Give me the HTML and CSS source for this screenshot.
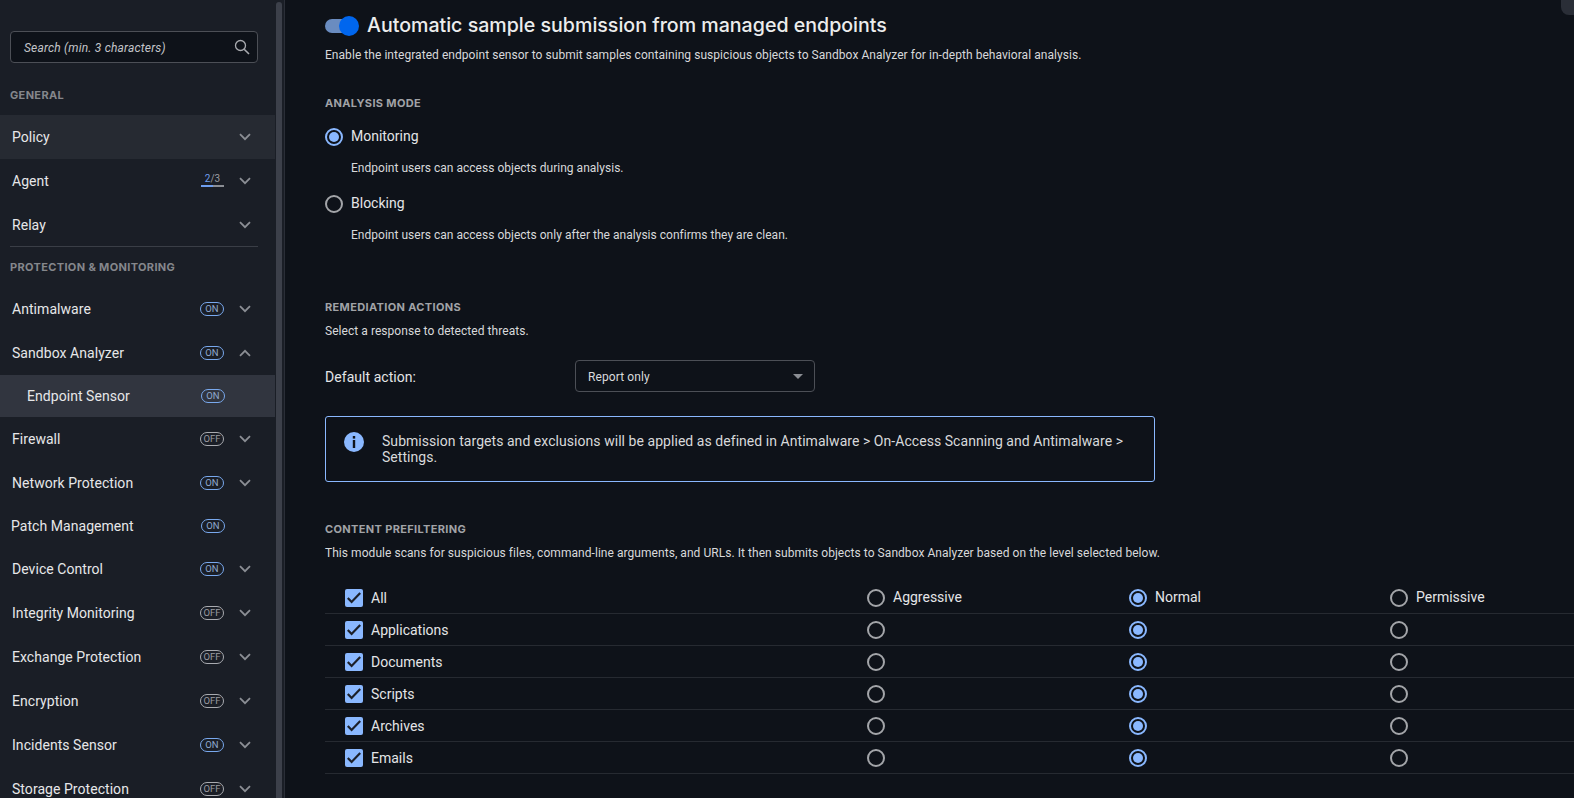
FILE: index.html
```html
<!DOCTYPE html>
<html>
<head>
  <title>Policy - Sandbox Analyzer</title>
  <link rel="stylesheet" href="styles.css">
</head>
<body>
  <svg class="sprites" width="0" height="0">
    <symbol id="chev" viewBox="0 0 12 8"><path d="M1 1.2 6 6.2 11 1.2" fill="none" stroke="#8b8e94" stroke-width="1.8"/></symbol>
    <symbol id="tick" viewBox="0 0 18 18"><path d="M2.8 9 6.6 13 15.2 4" fill="none" stroke="#1c2029" stroke-width="2.2"/></symbol>
  </svg>

  <aside class="sidebar">
    <div class="search">
      <span class="search-text">Search (min. 3 characters)</span>
      <svg class="search-icon" width="16" height="16" viewBox="0 0 16 16"><circle cx="6.5" cy="6.5" r="5" fill="none" stroke="#a9abb0" stroke-width="1.3"/><path d="M10.2 10.2 15 15" stroke="#a9abb0" stroke-width="1.6"/></svg>
    </div>

    <div class="nav-title">GENERAL</div>
    <div class="nav-row hover"><span class="nav-name">Policy</span><svg class="chev"><use href="#chev"/></svg></div>
    <div class="nav-row"><span class="nav-name">Agent</span><span class="progress"><span class="progress-text"><b>2</b>/3</span></span><svg class="chev"><use href="#chev"/></svg></div>
    <div class="nav-row"><span class="nav-name">Relay</span><svg class="chev"><use href="#chev"/></svg></div>
    <div class="nav-sep"></div>

    <div class="nav-title">PROTECTION &amp; MONITORING</div>
    <div class="nav-row"><span class="nav-name">Antimalware</span><span class="pill on">ON</span><svg class="chev"><use href="#chev"/></svg></div>
    <div class="nav-row"><span class="nav-name">Sandbox Analyzer</span><span class="pill on">ON</span><svg class="chev up"><use href="#chev"/></svg></div>
    <div class="nav-row sub"><span class="nav-name">Endpoint Sensor</span><span class="pill on">ON</span></div>
    <div class="nav-row"><span class="nav-name">Firewall</span><span class="pill">OFF</span><svg class="chev"><use href="#chev"/></svg></div>
    <div class="nav-row"><span class="nav-name">Network Protection</span><span class="pill on">ON</span><svg class="chev"><use href="#chev"/></svg></div>
    <div class="nav-row single"><span class="nav-name">Patch Management</span><span class="pill on">ON</span></div>
    <div class="nav-row"><span class="nav-name">Device Control</span><span class="pill on">ON</span><svg class="chev"><use href="#chev"/></svg></div>
    <div class="nav-row"><span class="nav-name">Integrity Monitoring</span><span class="pill">OFF</span><svg class="chev"><use href="#chev"/></svg></div>
    <div class="nav-row"><span class="nav-name">Exchange Protection</span><span class="pill">OFF</span><svg class="chev"><use href="#chev"/></svg></div>
    <div class="nav-row"><span class="nav-name">Encryption</span><span class="pill">OFF</span><svg class="chev"><use href="#chev"/></svg></div>
    <div class="nav-row"><span class="nav-name">Incidents Sensor</span><span class="pill on">ON</span><svg class="chev"><use href="#chev"/></svg></div>
    <div class="nav-row"><span class="nav-name">Storage Protection</span><span class="pill">OFF</span><svg class="chev"><use href="#chev"/></svg></div>
  </aside>
  <div class="scrollbar"><div class="thumb"></div></div>

  <main class="main">
    <div class="corner"></div>

    <div class="title-row">
      <span class="toggle"></span>
      <h1>Automatic sample submission from managed endpoints</h1>
    </div>
    <p class="text intro">Enable the integrated endpoint sensor to submit samples containing suspicious objects to Sandbox Analyzer for in-depth behavioral analysis.</p>

    <h2 class="mode-title">ANALYSIS MODE</h2>
    <div class="option first"><span class="radio checked"></span><span class="label">Monitoring</span></div>
    <p class="text hint">Endpoint users can access objects during analysis.</p>
    <div class="option second"><span class="radio"></span><span class="label">Blocking</span></div>
    <p class="text hint">Endpoint users can access objects only after the analysis confirms they are clean.</p>

    <h2 class="remediation-title">REMEDIATION ACTIONS</h2>
    <p class="text under-title">Select a response to detected threats.</p>
    <div class="action-row">
      <span class="label action-label">Default action:</span>
      <div class="select"><span class="select-text">Report only</span><span class="caret"></span></div>
    </div>

    <div class="info">
      <svg class="info-icon" width="20" height="20" viewBox="0 0 20 20"><circle cx="10" cy="10" r="10" fill="#8ab8ff"/><rect x="8.8" y="4" width="2.4" height="2.6" fill="#10141b"/><rect x="8.8" y="8" width="2.4" height="8" fill="#10141b"/></svg>
      <p>Submission targets and exclusions will be applied as defined in Antimalware &gt; On-Access Scanning and Antimalware &gt;<br>Settings.</p>
    </div>

    <h2 class="filter-title">CONTENT PREFILTERING</h2>
    <p class="text filter-text">This module scans for suspicious files, command-line arguments, and URLs. It then submits objects to Sandbox Analyzer based on the level selected below.</p>

    <div class="levels">
      <div class="level-row">
        <div class="cell name"><span class="check"><svg width="18" height="18"><use href="#tick"/></svg></span><span class="label">All</span></div>
        <div class="cell"><span class="radio"></span><span class="label">Aggressive</span></div>
        <div class="cell"><span class="radio checked"></span><span class="label">Normal</span></div>
        <div class="cell"><span class="radio"></span><span class="label">Permissive</span></div>
      </div>
      <div class="level-row">
        <div class="cell name"><span class="check"><svg width="18" height="18"><use href="#tick"/></svg></span><span class="label">Applications</span></div>
        <div class="cell"><span class="radio"></span></div>
        <div class="cell"><span class="radio checked"></span></div>
        <div class="cell"><span class="radio"></span></div>
      </div>
      <div class="level-row">
        <div class="cell name"><span class="check"><svg width="18" height="18"><use href="#tick"/></svg></span><span class="label">Documents</span></div>
        <div class="cell"><span class="radio"></span></div>
        <div class="cell"><span class="radio checked"></span></div>
        <div class="cell"><span class="radio"></span></div>
      </div>
      <div class="level-row">
        <div class="cell name"><span class="check"><svg width="18" height="18"><use href="#tick"/></svg></span><span class="label">Scripts</span></div>
        <div class="cell"><span class="radio"></span></div>
        <div class="cell"><span class="radio checked"></span></div>
        <div class="cell"><span class="radio"></span></div>
      </div>
      <div class="level-row">
        <div class="cell name"><span class="check"><svg width="18" height="18"><use href="#tick"/></svg></span><span class="label">Archives</span></div>
        <div class="cell"><span class="radio"></span></div>
        <div class="cell"><span class="radio checked"></span></div>
        <div class="cell"><span class="radio"></span></div>
      </div>
      <div class="level-row">
        <div class="cell name"><span class="check"><svg width="18" height="18"><use href="#tick"/></svg></span><span class="label">Emails</span></div>
        <div class="cell"><span class="radio"></span></div>
        <div class="cell"><span class="radio checked"></span></div>
        <div class="cell"><span class="radio"></span></div>
      </div>
    </div>
  </main>
</body>
</html>
```

FILE: styles.css
```css
html, body {
  height: 100%;
}
body {
  margin: 0;
  display: flex;
  overflow: hidden;
  background: #0e1219;
  color: #e4e5e7;
  font-family: Roboto, sans-serif;
  font-size: 12px;
}
.sprites {
  position: absolute;
}

/* sidebar */
.sidebar {
  width: 275px;
  flex: none;
  background: #1a1e26;
  padding-top: 31px;
  box-sizing: border-box;
  height: 798px;
  overflow: hidden;
}
.scrollbar {
  width: 10px;
  flex: none;
  background: #1a1e26;
  border-right: 1px solid #2a2e37;
  box-sizing: border-box;
  padding: 2px 2px 0 1px;
}
.thumb {
  width: 6px;
  height: 100%;
  background: #3c404a;
  border-radius: 3px 3px 0 0;
}
.search {
  display: flex;
  align-items: center;
  justify-content: space-between;
  height: 32px;
  box-sizing: border-box;
  margin: 0 17px 0 10px;
  padding: 0 8px 0 13px;
  background: #0e1219;
  border: 1px solid #4c4f56;
  border-radius: 4px;
}
.search-text {
  font-style: italic;
  letter-spacing: 0.2px;
  line-height: 18px;
  height: 16px;
  color: #c3c5c9;
}
.search-icon {
  margin-right: -1px;
}
.nav-title {
  height: 16px;
  line-height: 16px;
  margin: 24px 0 12px 10px;
  font-family: Inter, sans-serif;
  font-size: 11px;
  font-weight: 700;
  letter-spacing: 0.35px;
  color: #85878c;
}
.nav-sep + .nav-title {
  margin-top: 12px;
}
.nav-row {
  display: flex;
  align-items: center;
  height: 44px;
  padding: 0 24px 0 12px;
  font-size: 14px;
  letter-spacing: 0.05px;
  color: #e6e7e9;
}
.nav-row.hover {
  background: #262a32;
}
.nav-row.sub {
  height: 42px;
  padding: 0 50px 0 27px;
  background: #31353f;
}
.nav-row.single {
  height: 42px;
  padding: 0 50px 0 11px;
}
.nav-name {
  flex: 1;
}
.nav-sep {
  height: 1px;
  margin: -1px 17px 0 10px;
  background: #3a3e46;
}
.chev {
  width: 12px;
  height: 8px;
  margin-left: 15px;
}
.chev.up {
  transform: rotate(180deg);
}
.pill {
  width: 24px;
  height: 14px;
  box-sizing: border-box;
  border: 1px solid #a9abb0;
  border-radius: 7px;
  font-size: 9.5px;
  line-height: 12px;
  text-align: center;
  color: #9a9ca1;
}
.pill.on {
  border-color: #79a9ee;
  color: #8fa9cf;
}
.progress {
  width: 23px;
  height: 14px;
  margin-bottom: 3px;
  box-sizing: border-box;
  border-bottom: 2px solid #8b8e94;
  position: relative;
  font-size: 10px;
  line-height: 12px;
  text-align: center;
  color: #9a9ca1;
}
.progress::after {
  content: "";
  position: absolute;
  left: 0;
  bottom: -2px;
  width: 12px;
  height: 2px;
  background: #6f9ff0;
}
.progress b {
  font-weight: 400;
  color: #6f9ff0;
}

/* main content */
.main {
  flex: 1;
  min-width: 0;
  position: relative;
  padding-left: 40px;
}
.corner {
  position: absolute;
  top: 0;
  right: 0;
  width: 13px;
  height: 15px;
  background: #2a2e37;
  border-bottom-left-radius: 8px;
}
.title-row {
  display: flex;
  align-items: center;
  height: 20px;
  margin-top: 16px;
}
.toggle {
  width: 18px;
  height: 14px;
  margin-right: 24px;
  background: #6a8cc0;
  border-radius: 7px 0 0 7px;
  position: relative;
}
.toggle::after {
  content: "";
  position: absolute;
  left: 14px;
  top: -3px;
  width: 20px;
  height: 20px;
  background: #0066ee;
  border-radius: 50%;
}
h1 {
  margin: -2px 0 0;
  font-family: Inter, sans-serif;
  font-size: 19.6px;
  font-weight: 500;
  color: #eceded;
}
h2 {
  height: 16px;
  margin: 0;
  line-height: 16px;
  font-family: Inter, sans-serif;
  font-size: 11px;
  font-weight: 700;
  letter-spacing: 0.35px;
  color: #a1a3a7;
}
.text {
  height: 16px;
  margin: 0;
  line-height: 18px;
  letter-spacing: 0.05px;
  color: #d8d9db;
}
.intro { margin-top: 10px; }
.mode-title { margin-top: 33px; }
.option {
  display: flex;
  align-items: center;
  height: 18px;
}
.option .radio {
  margin-top: 2px;
}
.option.first { margin-top: 16px; }
.option.second { margin-top: 19px; }
.hint {
  margin: 14px 0 0 26px;
  letter-spacing: 0.02px;
}
.remediation-title { margin-top: 57px; }
.under-title { margin-top: 7px; }
.label {
  font-size: 14px;
  line-height: 18px;
  margin-left: 8px;
  color: #e4e5e7;
}
.radio {
  width: 18px;
  height: 18px;
  flex: none;
  box-sizing: border-box;
  border: 2px solid #a3a5a9;
  border-radius: 50%;
}
.radio.checked {
  border-color: #8ab8ff;
  padding: 2px;
  background: #8ab8ff content-box;
}
.action-row {
  display: flex;
  align-items: center;
  margin-top: 22px;
}
.action-label {
  width: 250px;
  margin: 0;
  line-height: 20px;
  height: 18px;
  letter-spacing: 0.05px;
}
.select {
  display: flex;
  align-items: center;
  justify-content: space-between;
  width: 240px;
  height: 32px;
  box-sizing: border-box;
  padding: 0 11px 0 12px;
  border: 1px solid #4c4f56;
  border-radius: 4px;
  color: #dadbdd;
}
.select-text {
  height: 16px;
  line-height: 18px;
  letter-spacing: 0.1px;
}
.caret {
  border-left: 5px solid transparent;
  border-right: 5px solid transparent;
  border-top: 5px solid #8b8e94;
}
.info {
  display: flex;
  width: 830px;
  height: 66px;
  box-sizing: border-box;
  margin-top: 24px;
  padding: 15px 0 0 18px;
  border: 1px solid #8ab8ff;
  border-radius: 3px;
}
.info p {
  margin: 1px 0 0 18px;
  font-size: 14px;
  line-height: 16px;
  letter-spacing: 0.05px;
  color: #d8d9db;
}
.filter-title { margin-top: 39px; }
.filter-text { margin-top: 7px; }
.levels {
  margin-top: 22px;
}
.level-row {
  display: grid;
  grid-template-columns: 542px 262px 261px 1fr;
  height: 32px;
  box-sizing: border-box;
  padding-top: 7px;
  border-bottom: 1px solid #262a31;
}
.cell {
  display: flex;
  align-items: flex-start;
}
.cell.name {
  padding-left: 20px;
}
.cell:not(.name) .label {
  margin-top: -1px;
}
.check {
  display: flex;
  align-items: center;
  justify-content: center;
  width: 18px;
  height: 18px;
  flex: none;
  background: #8ab8ff;
  border-radius: 2px;
}
```
